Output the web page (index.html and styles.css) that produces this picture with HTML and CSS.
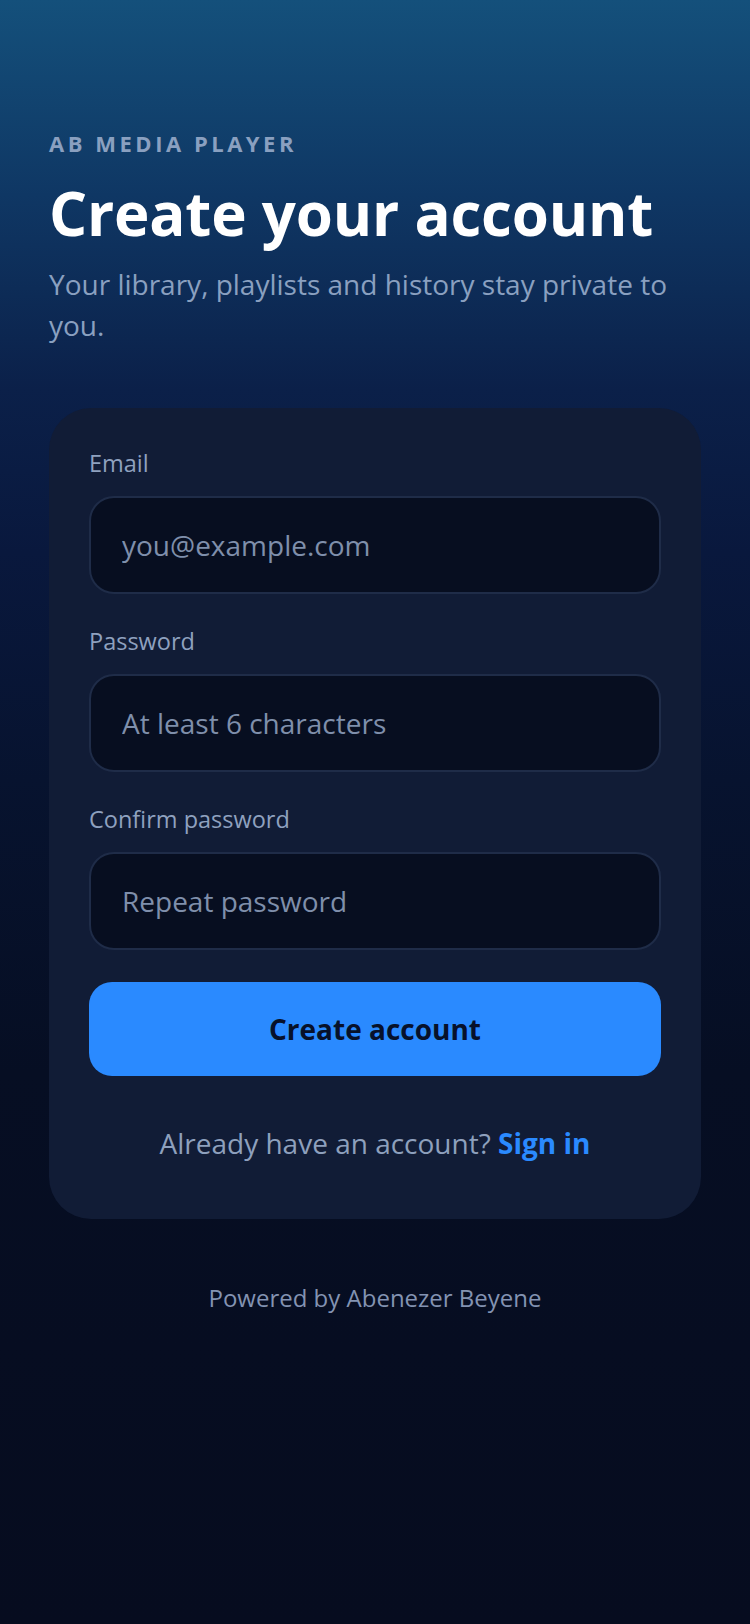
FILE: index.html
```html
<!DOCTYPE html>
<html lang="en">
  <head>
    <meta charset="UTF-8" />
    <meta name="viewport" content="width=device-width, initial-scale=1.0" />
    <title>Create account - AB Media Player</title>
    <link rel="stylesheet" href="styles.css">
  </head>
  <body>
    <div class="page">
      <div class="intro">
        <p class="brand">AB MEDIA PLAYER</p>
        <h1 class="title">Create your account</h1>
        <p class="lead">Your library, playlists and history stay private to you.</p>
      </div>
      <form class="card" onsubmit="return false">
        <label class="field">
          <span class="label">Email</span>
          <input class="input" type="email" placeholder="you@example.com" />
        </label>
        <label class="field">
          <span class="label">Password</span>
          <input class="input" type="password" placeholder="At least 6 characters" />
        </label>
        <label class="field">
          <span class="label">Confirm password</span>
          <input class="input" type="password" placeholder="Repeat password" />
        </label>
        <button class="submit" type="submit">Create account</button>
        <p class="switch">Already have an account? <a href="#">Sign in</a></p>
      </form>
      <p class="footer">Powered by Abenezer Beyene</p>
    </div>
  </body>
</html>
```

FILE: styles.css
```css
* {
  margin: 0;
  padding: 0;
  box-sizing: border-box;
}
body {
  font-family: "Open Sans", "Noto Sans", sans-serif;
  color: #fff;
  background: #060c1f linear-gradient(
      180deg,
      #14507b 0%,
      #0f3764 12%,
      #0b2049 24%,
      #09183d 34%,
      #07132f 48%,
      #060e23 66%,
      #060c1f 100%
    )
    no-repeat;
  background-size: 100% 1624px;
  min-height: 1624px;
}
.page {
  padding: 128px 49px 0;
}
.brand {
  font-size: 22px;
  font-weight: 700;
  line-height: 30px;
  letter-spacing: 0.16em;
  color: #8aa0c0;
}
.title {
  margin-top: 17px;
  font-size: 60px;
  font-weight: 700;
  line-height: 76px;
  letter-spacing: -0.2px;
  color: #fff;
}
.lead {
  margin-top: 13px;
  font-size: 28px;
  line-height: 41px;
  color: #8aa0c0;
}
.card {
  margin-top: 62px;
  padding: 40px 40px 56px;
  background-color: #111c36;
  border-radius: 42px;
  display: flex;
  flex-direction: column;
}
.field {
  display: flex;
  flex-direction: column;
  gap: 17px;
  margin-bottom: 32px;
}
.label {
  font-size: 23.5px;
  line-height: 31px;
  color: #8fa1bf;
}
.input {
  height: 98px;
  padding: 0 31px;
  border: 2px solid #1f2c48;
  border-radius: 25px;
  background-color: #070e20;
  font-family: inherit;
  font-size: 28px;
  color: #fff;
  outline: none;
}
.input::placeholder {
  color: #7f8fab;
}
.submit {
  height: 94px;
  border: none;
  border-radius: 23px;
  background-color: #2a8aff;
  font-family: inherit;
  font-size: 28px;
  font-weight: 700;
  color: #07112a;
  cursor: pointer;
}
.switch {
  margin-top: 47px;
  text-align: center;
  font-size: 28px;
  line-height: 40px;
  color: #8ea0bd;
}
.switch a {
  color: #2a8aff;
  font-weight: 700;
  text-decoration: none;
}
.footer {
  margin-top: 63px;
  text-align: center;
  font-size: 24px;
  line-height: 32px;
  color: #8393b2;
}
```
